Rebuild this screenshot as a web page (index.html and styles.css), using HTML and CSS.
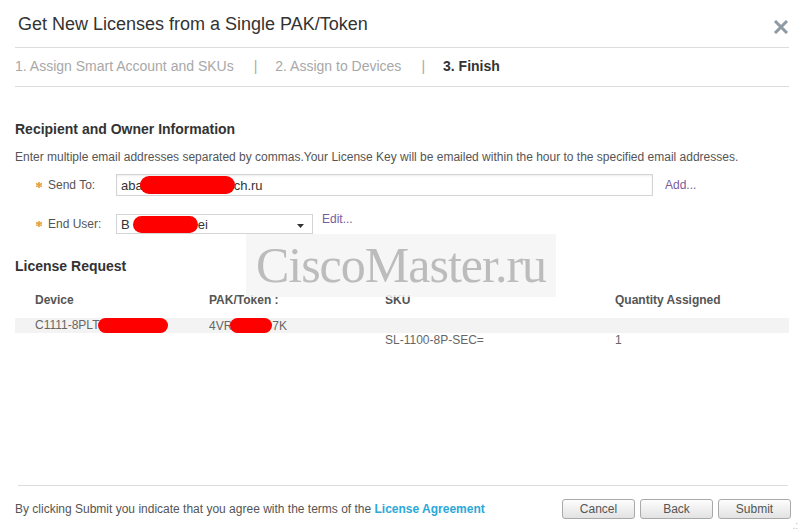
FILE: index.html
```html
<!DOCTYPE html>
<html>
<head>
<meta charset="utf-8">
<link rel="stylesheet" href="styles.css">
</head>
<body>
<div class="dialog">
  <div class="header">
    <h1 class="title">Get New Licenses from a Single PAK/Token</h1>
    <svg class="close" width="16" height="14" viewBox="0 0 16 14"><path d="M2 1 L14 13 M14 1 L2 13" stroke="#8d9ba4" stroke-width="3" stroke-linecap="butt"/></svg>
  </div>
  <div class="steps">
    <span class="step">1. Assign Smart Account and SKUs</span>
    <span class="sep">|</span>
    <span class="step">2. Assign to Devices</span>
    <span class="sep">|</span>
    <span class="step current">3. Finish</span>
  </div>

  <div class="main">
    <h2 class="section-title">Recipient and Owner Information</h2>
    <p class="desc">Enter multiple email addresses separated by commas.Your License Key will be emailed within the hour to the specified email addresses.</p>

    <div class="form-row">
      <label class="label"><svg class="req" width="6" height="6" viewBox="0 0 6 6"><path d="M3 0 V6 M0 1.5 L6 4.5 M0 4.5 L6 1.5" stroke="#e6a23c" stroke-width="1.6"/></svg>Send To:</label>
      <div class="input"><span>aba</span><span class="redact r-send"></span><span>ch.ru</span></div>
      <a class="link add">Add...</a>
    </div>

    <div class="form-row row2">
      <label class="label"><svg class="req" width="6" height="6" viewBox="0 0 6 6"><path d="M3 0 V6 M0 1.5 L6 4.5 M0 4.5 L6 1.5" stroke="#e6a23c" stroke-width="1.6"/></svg>End User:</label>
      <div class="select"><span>B</span><span class="redact r-user"></span><span>ei</span><svg class="caret" width="7" height="4" viewBox="0 0 7 4"><path d="M0 0 H7 L3.5 4 Z" fill="#333"/></svg></div>
      <a class="link edit">Edit...</a>
    </div>

    <h2 class="section-title lr">License Request</h2>
    <div class="table">
      <div class="thead">
        <span>Device</span><span>PAK/Token :</span><span>SKU</span><span>Quantity Assigned</span>
      </div>
      <div class="trow">
        <span class="top">C1111-8PLT<span class="redact r-dev"></span></span>
        <span class="top">4VR<span class="redact r-pak"></span>7K</span>
        <span class="bottom">SL-1100-8P-SEC=</span>
        <span class="bottom">1</span>
      </div>
    </div>
  </div>

  <div class="footer-rule"></div>
  <div class="footer">
    <p class="terms">By clicking Submit you indicate that you agree with the terms of the <a class="agreement">License Agreement</a></p>
    <div class="buttons">
      <button class="btn">Cancel</button>
      <button class="btn">Back</button>
      <button class="btn">Submit</button>
    </div>
  </div>

  <div class="watermark">CiscoMaster.ru</div>
  <div class="grip">.:</div>
</div>
</body>
</html>
```

FILE: styles.css
```css
* { box-sizing: border-box; }
html, body { margin: 0; padding: 0; background: #fff; }
body { font-family: "Liberation Sans", Arial, sans-serif; color: #333; }

.dialog {
  position: relative;
  width: 800px;
  height: 531px;
  display: flex;
  flex-direction: column;
  overflow: hidden;
}

.header {
  display: flex;
  justify-content: space-between;
  align-items: flex-start;
  margin: 0 11px 0 15px;
  height: 48px;
  padding-top: 14px;
  border-bottom: 1px solid #dcdcdc;
}
.title {
  margin: 0 0 0 3px;
  font-size: 18px;
  line-height: 20px;
  font-weight: normal;
  color: #333;
}
.close { margin-top: 6px; margin-right: 0; }

.steps {
  display: flex;
  margin: 0 11px 0 15px;
  height: 39px;
  padding-top: 10px;
  border-bottom: 1px solid #dcdcdc;
  font-size: 14px;
  line-height: 16px;
  color: #a8a8a8;
}
.sep { margin: 0 18px 0 20px; }
.step.current { font-weight: bold; color: #333; }

.main { flex: 1; padding-left: 15px; }

.section-title {
  margin: 34px 0 0;
  font-size: 14px;
  line-height: 16px;
  font-weight: bold;
  color: #333;
}
.desc {
  margin: 13px 0 0;
  font-size: 12px;
  line-height: 15px;
  color: #555;
}

.form-row {
  display: flex;
  align-items: center;
  margin-top: 9px;
  height: 22px;
}
.form-row.row2 { margin-top: 18px; height: 20px; }
.label {
  display: flex;
  align-items: center;
  width: 101px;
  padding-left: 21px;
  font-size: 12px;
  color: #555;
}
.req { margin-right: 6px; }

.input {
  display: flex;
  align-items: center;
  width: 537px;
  height: 22px;
  border: 1px solid #d4d4d4;
  box-shadow: inset 0 1px 2px rgba(0,0,0,0.08);
  padding-left: 4px;
  font-size: 13px;
  color: #333;
}
.select {
  position: relative;
  display: flex;
  align-items: center;
  width: 197px;
  height: 20px;
  border: 1px solid #d4d4d4;
  padding-left: 4px;
  font-size: 13px;
  color: #333;
}
.caret { position: absolute; right: 8px; top: 9px; }

.link { color: #7a5b9c; font-size: 12px; cursor: pointer; }
.add { margin-left: 12px; }
.edit { margin-left: 9px; align-self: flex-start; margin-top: -2px; }

.redact {
  display: inline-block;
  background: #ff0000;
  border-radius: 10px;
}
.r-send { width: 95px; height: 18px; margin-left: -3px; margin-right: -1px; }
.r-user { width: 65px; height: 17px; margin-left: 3px; }
.r-dev { width: 70px; height: 15px; vertical-align: -4px; margin-left: -1px; }
.r-pak { width: 42px; height: 15px; vertical-align: -3px; margin-left: -2px; }

.section-title.lr { margin-top: 24px; }

.table { margin-top: 19px; margin-right: 11px; font-size: 12px; line-height: 15px; }
.thead, .trow {
  display: grid;
  grid-template-columns: 174px 176px 230px 1fr;
  padding-left: 20px;
}
.thead { font-weight: bold; color: #555; }
.trow {
  margin-top: 10px;
  height: 30px;
  color: #666;
  background: linear-gradient(#f3f3f3 15px, transparent 15px);
}
.trow .top { align-self: start; white-space: nowrap; }
.trow .bottom { align-self: end; }

.footer-rule {
  margin: 0 12px 0 18px;
  border-top: 1px solid #dcdcdc;
}
.footer {
  display: flex;
  align-items: center;
  justify-content: space-between;
  height: 45px;
  padding: 0 9px 0 15px;
}
.terms { margin: 0; font-size: 12px; color: #555; }
.agreement { color: #2aa8d9; font-weight: bold; }
.buttons { display: flex; gap: 5px; margin-top: 1px; }
.btn {
  width: 73px;
  height: 20px;
  padding: 0;
  border: 1px solid #a9a9a9;
  border-radius: 3px;
  background: linear-gradient(#fdfdfd, #e2e2e2);
  font-family: "Liberation Sans", Arial, sans-serif;
  font-size: 12px;
  color: #555;
}

.watermark {
  position: absolute;
  left: 246px;
  top: 234px;
  width: 310px;
  height: 63px;
  background: rgba(244,244,244,0.85);
  font-family: "Liberation Serif", "Times New Roman", serif;
  font-size: 50px;
  line-height: 63px;
  letter-spacing: -1px;
  text-align: center;
  color: #bcbcbc;
}
.grip {
  position: absolute;
  right: 2px;
  bottom: 0;
  font-size: 10px;
  line-height: 10px;
  color: #bbb;
}
```
